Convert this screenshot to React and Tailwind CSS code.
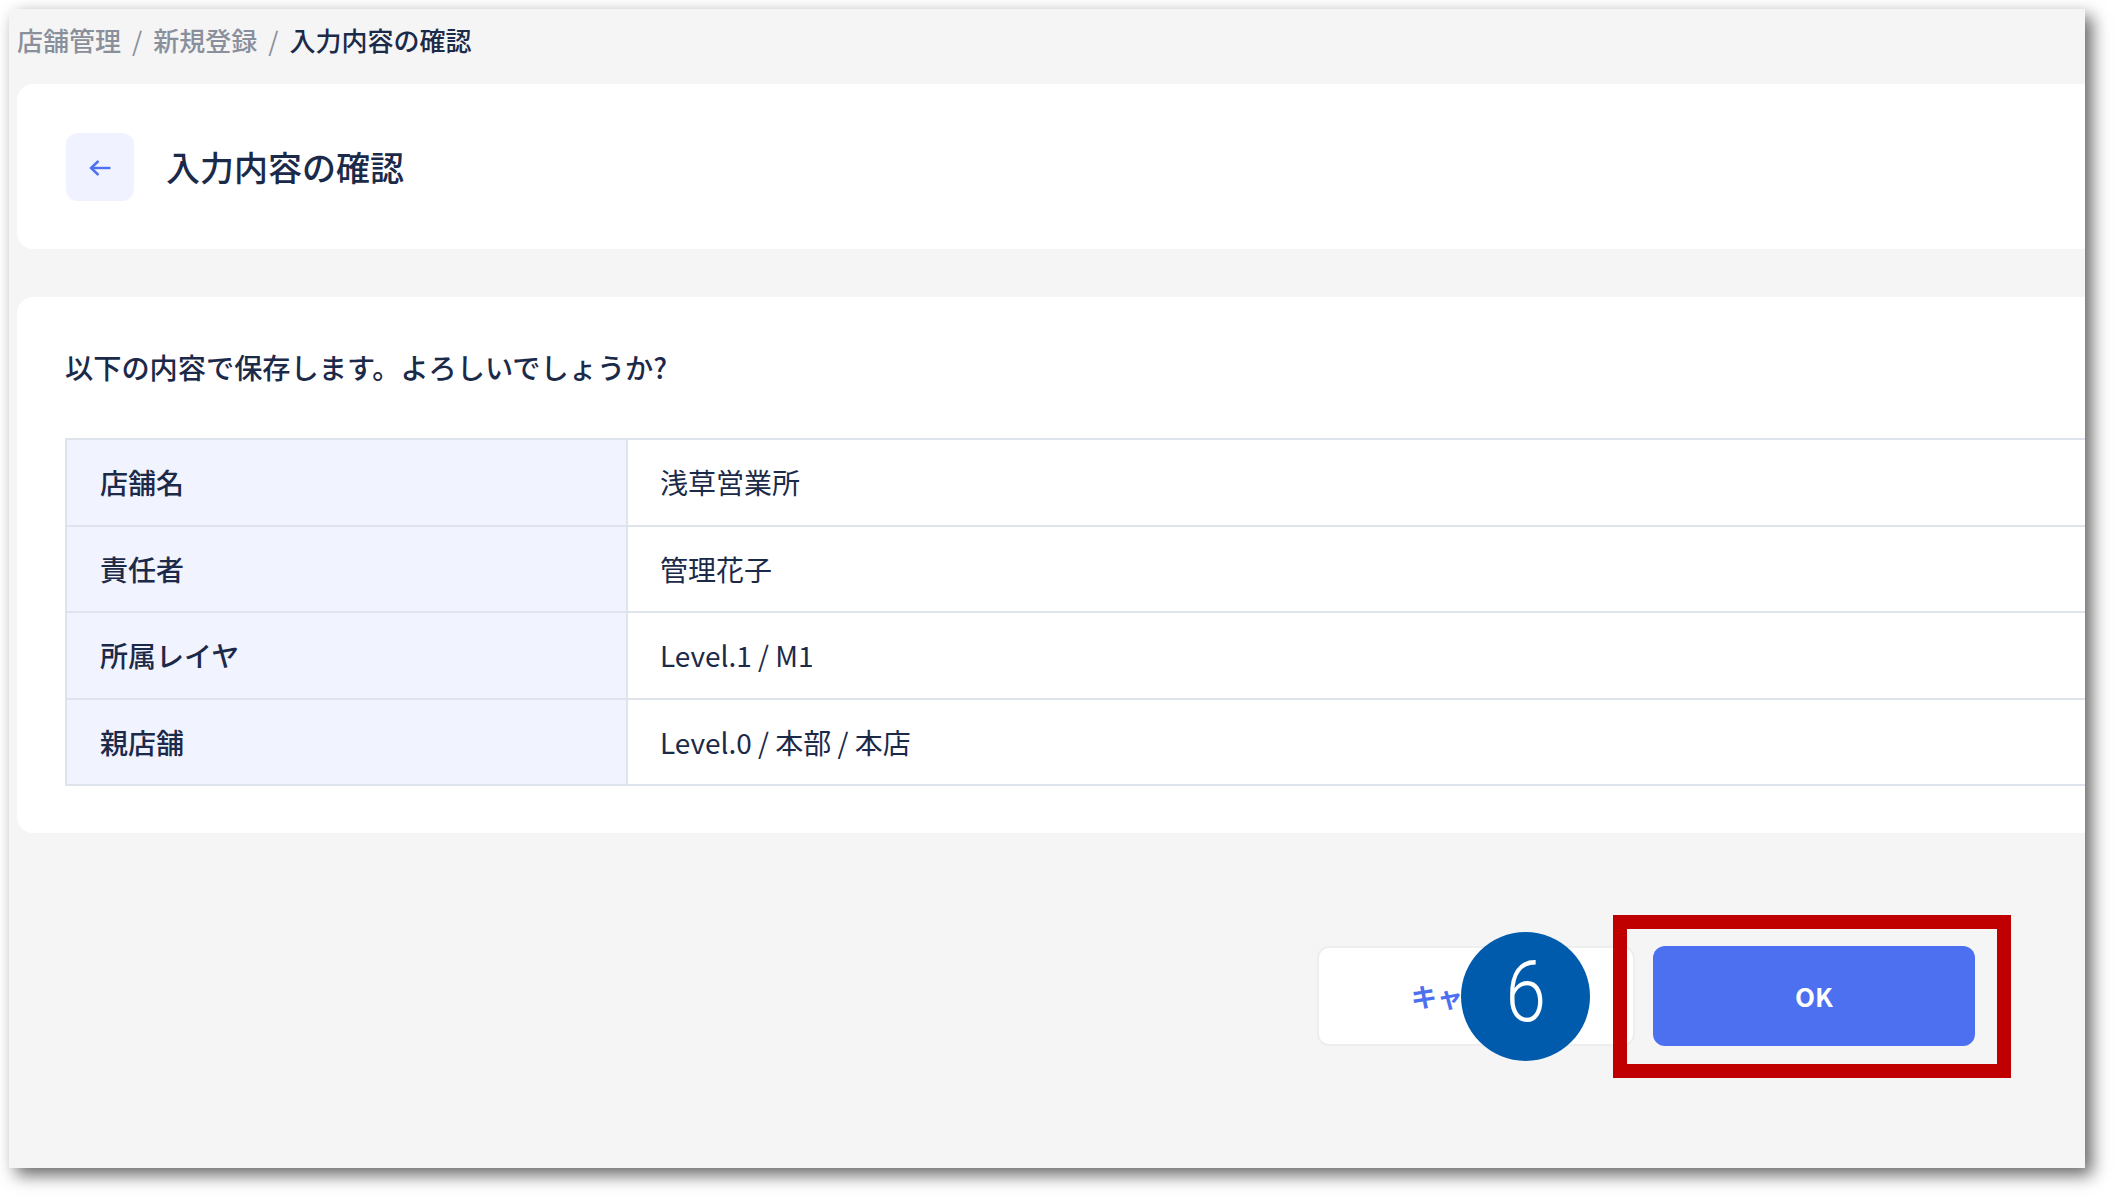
import React from 'react';

const rows = [
  { label: '店舗名', value: '浅草営業所' },
  { label: '責任者', value: '管理花子' },
  { label: '所属レイヤ', value: 'Level.1 / M1' },
  { label: '親店舗', value: 'Level.0 / 本部 / 本店' },
];

const App = () => {
  return (
    <div className="w-[2114px] h-[1197px] bg-white pt-[9px] pl-[9px] font-['Noto_Sans_CJK_JP','Noto_Sans',sans-serif] text-[#1c2a4a]">
      <div className="relative w-[2076px] h-[1159px] bg-[#f5f5f5] overflow-hidden pl-2 shadow-[7px_7px_16px_rgba(0,0,0,0.6)]">
        {/* Breadcrumb */}
        <div className="flex items-center h-[75px] pb-[15px] text-[26px] font-medium text-[#8a8f9c] gap-[11px]">
          <span>店舗管理</span>
          <span className="font-normal">/</span>
          <span>新規登録</span>
          <span className="font-normal">/</span>
          <span className="text-[#1c2a4a]">入力内容の確認</span>
        </div>

        {/* Page title */}
        <div className="flex items-center gap-[33px] h-[165px] w-[2100px] bg-white rounded-l-2xl pl-[49px]">
          <button className="flex items-center justify-center w-[68px] h-[68px] rounded-xl bg-[#f0f3ff]">
            <svg width="22" height="16" viewBox="0 0 22 16" fill="none" stroke="#4d70f0" strokeWidth="2.4" className="mt-[2px]">
              <path d="M21.5 8H2" />
              <path d="M9.5 1L2 8l7.5 7" />
            </svg>
          </button>
          <h1 className="text-[34px] font-medium -ml-px">入力内容の確認</h1>
        </div>

        {/* Confirmation */}
        <div className="mt-12 w-[2100px] h-[536px] bg-white rounded-l-2xl pl-[48px] pt-[49px]">
          <p className="text-[28.2px] leading-[42px] font-medium">以下の内容で保存します。よろしいでしょうか?</p>
          <table className="mt-[50px] w-full border-collapse text-[28px]">
            <tbody>
              {rows.map((row) => (
                <tr key={row.label} className="h-[86.5px]">
                  <th className="w-[561px] pl-[33px] text-left font-medium bg-[#f1f3fe] border-2 border-[#dfe3ec]">{row.label}</th>
                  <td className="pl-8 font-normal border-2 border-[#dfe3ec]">{row.value}</td>
                </tr>
              ))}
            </tbody>
          </table>
        </div>

        {/* Actions */}
        <div className="mt-[113px] flex justify-end gap-[18px] pr-[110px]">
          <button className="w-[318px] h-[100px] pb-[2px] -ml-[2px] rounded-xl bg-white border-2 border-[#eeeeee] text-[26px] font-bold text-[#4d70f0]">キャンセル</button>
          <button className="w-[322px] h-[100px] pb-[2px] rounded-xl bg-[#4d70f0] text-[26px] font-bold text-white">OK</button>
        </div>

        {/* Annotations */}
        <div className="absolute left-[1452px] top-[923px] w-[129px] h-[129px] pb-[9px] rounded-full bg-[#005bac] flex items-center justify-center text-white font-['Roboto',sans-serif] font-light leading-none">
          <span className="text-[86px] scale-x-[0.85]">6</span>
        </div>
        <div className="absolute left-[1604px] top-[906px] w-[398px] h-[163px] border-[14px] border-[#c00000]" />
      </div>
    </div>
  );
};

export default App;
